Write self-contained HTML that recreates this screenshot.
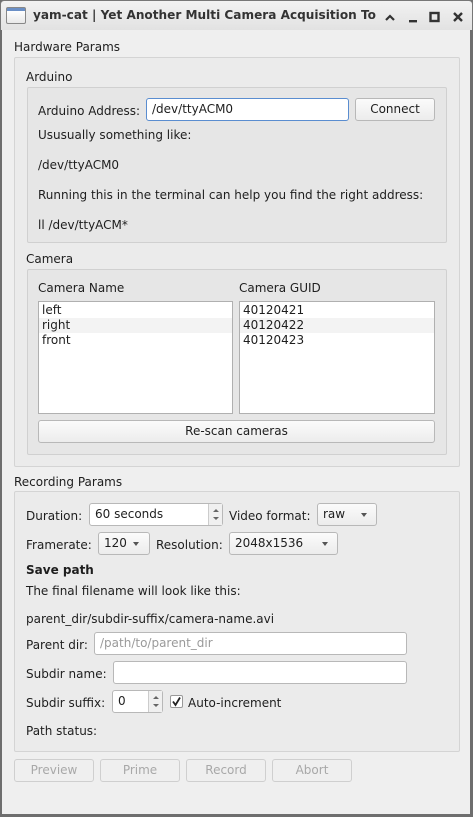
<!DOCTYPE html>
<html><head><meta charset="utf-8"><style>
*{box-sizing:border-box;margin:0;padding:0}
body{width:473px;height:817px;overflow:hidden;background:#6e6e6e;font-family:"DejaVu Sans","Liberation Sans",sans-serif;font-size:12px;color:#1e1e1e;position:relative}
.a{position:absolute;white-space:nowrap}
.win{position:absolute;left:2px;top:30px;width:468px;height:784px;background:#efefef}
.title{position:absolute;left:0;top:0;width:473px;height:30px;background:linear-gradient(#f2f2f2,#e2e2e2);border:1px solid #777;border-bottom:none;border-radius:4px 4px 0 0}
.grp{position:absolute;border:1px solid #d4d4d4;border-radius:2px;background:#ebebeb}
.grp2{position:absolute;border:1px solid #d0d0d0;border-radius:2px;background:#e6e6e6}
.in{position:absolute;background:#fff;border:1px solid #b8b8b8;border-radius:3px;padding-left:5px;line-height:21px}
.btn{position:absolute;border:1px solid #b8b8b8;border-radius:3px;background:linear-gradient(#fbfbfb,#ececec);text-align:center;line-height:21px}
.dis{color:#a8a8a8;border-color:#cfcfcf;background:#efefef}
.arr{position:absolute;width:0;height:0;border-left:3.5px solid transparent;border-right:3.5px solid transparent;border-top:4px solid #555}
.list{position:absolute;background:#fff;border:1px solid #b0b0b0;padding-top:1px}
.list div{height:15px;line-height:15px;padding-left:3px}
.sp{position:absolute;right:0;top:0;width:14px;height:100%;border-left:1px solid #ccc;background:#f0f0f0}
</style></head><body>
<div class="title">
<div class="a" style="left:5px;top:6px;width:20px;height:17px;border:1px solid #888;border-radius:2px;background:linear-gradient(#6a8fc6 0,#6a8fc6 3px,#fff 3px,#e8e8e8)"></div>
<div class="a" style="left:32px;top:7px;width:350px;overflow:hidden;font-weight:bold;font-size:12.1px;color:#333">yam-cat | Yet Another Multi Camera Acquisition To</div>
<svg class="a" style="left:383px;top:9px" width="85" height="14"><path d="M2 10 L6 6 L10 10" stroke="#333" stroke-width="2.2" fill="none"/><rect x="25" y="10" width="8" height="2.4" fill="#333"/><rect x="46.5" y="3" width="8" height="8" stroke="#333" stroke-width="2.4" fill="none"/><path d="M70 3 L78 11 M78 3 L70 11" stroke="#333" stroke-width="2.4"/></svg>
</div>
<div class="a" style="left:0;top:30px;width:473px;height:787px;background:#6e6e6e"></div>
<div class="win"></div>

<div class="a" style="left:14px;top:40px">Hardware Params</div>
<div class="grp" style="left:14px;top:57px;width:446px;height:410px"></div>
<div class="a" style="left:26px;top:70px">Arduino</div>
<div class="grp2" style="left:27px;top:87px;width:420px;height:156px"></div>
<div class="a" style="left:38px;top:104px">Arduino Address:</div>
<div class="in" style="left:146px;top:98px;width:203px;height:23px;border-color:#5a8dd0">/dev/ttyACM0</div>
<div class="btn" style="left:355px;top:98px;width:80px;height:23px">Connect</div>
<div class="a" style="left:38px;top:128px">Ususually something like:</div>
<div class="a" style="left:38px;top:158px">/dev/ttyACM0</div>
<div class="a" style="left:38px;top:188px">Running this in the terminal can help you find the right address:</div>
<div class="a" style="left:38px;top:218px">ll /dev/ttyACM*</div>

<div class="a" style="left:26px;top:252px">Camera</div>
<div class="grp2" style="left:27px;top:269px;width:420px;height:186px"></div>
<div class="a" style="left:38px;top:281px">Camera Name</div>
<div class="a" style="left:239px;top:281px">Camera GUID</div>
<div class="list" style="left:38px;top:301px;width:195px;height:113px"><div>left</div><div style="background:#f3f3f3">right</div><div>front</div></div>
<div class="list" style="left:239px;top:301px;width:196px;height:113px"><div>40120421</div><div style="background:#f3f3f3">40120422</div><div>40120423</div></div>
<div class="btn" style="left:38px;top:420px;width:397px;height:23px">Re-scan cameras</div>

<div class="a" style="left:14px;top:475px">Recording Params</div>
<div class="grp" style="left:14px;top:491px;width:446px;height:261px"></div>
<div class="a" style="left:26px;top:509px">Duration:</div>
<div class="in" style="left:89px;top:503px;width:134px;height:23px">60 seconds<div class="sp"><svg width="14" height="21"><path d="M4 8 L7 5 L10 8 Z M4 13 L7 16 L10 13 Z" fill="#666"/></svg></div></div>
<div class="a" style="left:229px;top:509px">Video format:</div>
<div class="btn" style="left:317px;top:503px;width:60px;height:23px;text-align:left;padding-left:5px">raw</div><div class="arr" style="left:361px;top:513px"></div>
<div class="a" style="left:26px;top:538px">Framerate:</div>
<div class="btn" style="left:98px;top:532px;width:52px;height:23px;text-align:left;padding-left:5px">120</div><div class="arr" style="left:133px;top:542px"></div>
<div class="a" style="left:156px;top:538px">Resolution:</div>
<div class="btn" style="left:229px;top:532px;width:109px;height:23px;text-align:left;padding-left:5px">2048x1536</div><div class="arr" style="left:322px;top:542px"></div>
<div class="a" style="left:26px;top:563px;font-weight:bold">Save path</div>
<div class="a" style="left:26px;top:584px">The final filename will look like this:</div>
<div class="a" style="left:26px;top:612px">parent_dir/subdir-suffix/camera-name.avi</div>
<div class="a" style="left:26px;top:638px">Parent dir:</div>
<div class="in" style="left:94px;top:632px;width:313px;height:23px;color:#9a9a9a">/path/to/parent_dir</div>
<div class="a" style="left:26px;top:667px">Subdir name:</div>
<div class="in" style="left:113px;top:661px;width:294px;height:23px"></div>
<div class="a" style="left:26px;top:696px">Subdir suffix:</div>
<div class="in" style="left:112px;top:690px;width:51px;height:23px">0<div class="sp"><svg width="14" height="21"><path d="M4 8 L7 5 L10 8 Z M4 13 L7 16 L10 13 Z" fill="#666"/></svg></div></div>
<div class="a" style="left:170px;top:695px;width:13px;height:13px;background:#fff;border:1px solid #999;border-radius:2px"><svg width="11" height="11" style="position:absolute;left:0;top:0"><path d="M2 5.5 L4.5 9 L9 1.5" stroke="#222" stroke-width="1.8" fill="none"/></svg></div>
<div class="a" style="left:188px;top:696px">Auto-increment</div>
<div class="a" style="left:26px;top:724px">Path status:</div>

<div class="btn dis" style="left:14px;top:759px;width:80px;height:23px">Preview</div>
<div class="btn dis" style="left:100px;top:759px;width:80px;height:23px">Prime</div>
<div class="btn dis" style="left:186px;top:759px;width:80px;height:23px">Record</div>
<div class="btn dis" style="left:272px;top:759px;width:80px;height:23px">Abort</div>
</body></html>
